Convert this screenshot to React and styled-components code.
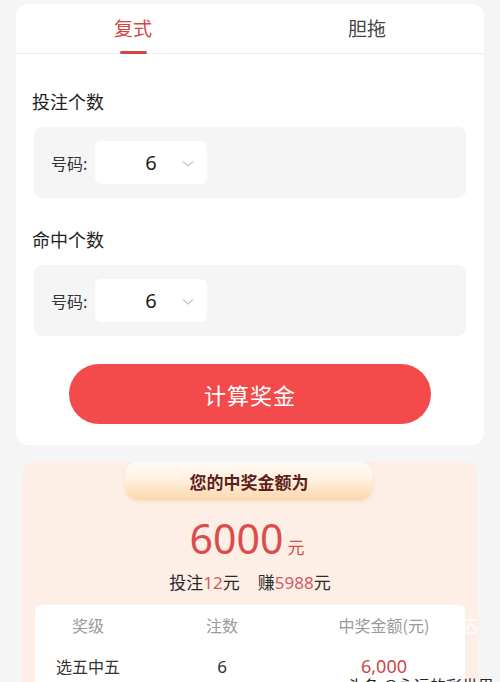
import React from "react";
import styled, { createGlobalStyle } from "styled-components";

const Global = createGlobalStyle`
  html, body { margin: 0; padding: 0; background: #f5f5f5; }
  body {
    font-family: "Noto Sans", "Noto Sans CJK SC", sans-serif;
    color: #333;
    -webkit-font-smoothing: antialiased;
  }
`;

const Page = styled.div`
  position: relative;
  height: 682px;
  overflow: hidden;
  padding: 4px 16px 0;
  box-sizing: border-box;
  background: #f5f5f5;
`;

const Card = styled.div`
  background: #fff;
  border-radius: 12px;
  padding-bottom: 21px;
`;

const Tabs = styled.div`
  display: grid;
  grid-template-columns: 1fr 1fr;
  height: 49px;
  border-bottom: 1px solid #ececec;
`;

const Tab = styled.div`
  position: relative;
  display: flex;
  align-items: center;
  justify-content: center;
  padding-bottom: 3px;
  font-family: "Noto Sans CJK SC", sans-serif;
  font-size: 19px;
  color: ${(p) => (p.$active ? "#d6453f" : "#444")};
  &::after {
    content: "";
    display: ${(p) => (p.$active ? "block" : "none")};
    position: absolute;
    bottom: -1px;
    left: 50%;
    width: 27px;
    height: 3px;
    margin-left: -13px;
    border-radius: 2px;
    background: #d6453f;
  }
`;

const Body = styled.div`
  padding: 0 18px;
  display: flex;
  flex-direction: column;
`;

const Label = styled.div`
  margin-top: ${(p) => p.$top}px;
  margin-left: -2px;
  font-family: "Noto Sans CJK SC", sans-serif;
  font-size: 18px;
  line-height: 24px;
  color: #222;
`;

const Field = styled.div`
  margin-top: 14px;
  height: 71px;
  background: #f5f5f5;
  border-radius: 8px;
  display: flex;
  align-items: center;
  padding-left: 17px;
  gap: 6px;
`;

const FieldName = styled.span`
  font-family: "Noto Sans CJK SC", sans-serif;
  font-size: 16px;
  color: #333;
  width: 38px;
`;

const Select = styled.div`
  width: 112px;
  height: 43px;
  background: #fff;
  border-radius: 6px;
  display: grid;
  grid-template-columns: 1fr 1fr 1fr;
  align-items: center;
  justify-items: center;
`;

const SelectValue = styled.span`
  grid-column: 2;
  font-family: "Noto Sans", sans-serif;
  font-size: 20px;
  color: #222;
`;

const ChevronBox = styled.span`
  grid-column: 3;
  display: flex;
  padding-top: 2px;
`;

const Button = styled.button`
  margin: 28px 35px 0;
  height: 60px;
  border: 0;
  border-radius: 30px;
  background: #f34b4b;
  color: #fff;
  font-family: "Noto Sans CJK SC", sans-serif;
  font-size: 22px;
  letter-spacing: 1px;
`;

const Result = styled.div`
  margin: 17px 6px 0;
  background: #fdeee6;
  border-radius: 12px;
  padding: 0 13px 40px;
  display: flex;
  flex-direction: column;
  align-items: stretch;
`;

const Banner = styled.div`
  align-self: center;
  width: 248px;
  height: 38px;
  margin-left: -2px;
  border-radius: 12px 12px 14px 14px;
  background: linear-gradient(180deg, #fffaf4 0%, #fff1e1 45%, #fcd7ab 100%);
  box-shadow: 0 2px 3px rgba(240, 180, 120, 0.25);
  display: flex;
  align-items: center;
  justify-content: center;
  font-family: "Noto Sans CJK SC", sans-serif;
  font-size: 17px;
  font-weight: 700;
  color: #5e1f1b;
`;

const Amount = styled.div`
  margin-top: 10px;
  display: flex;
  align-items: baseline;
  justify-content: center;
  color: #dc4c4c;
  padding-right: 6px;
`;

const Big = styled.span`
  font-family: "Noto Sans", sans-serif;
  font-size: 41px;
  line-height: 56px;
`;

const Unit = styled.span`
  margin-left: 4px;
  font-family: "Noto Sans CJK SC", sans-serif;
  font-size: 17px;
`;

const Summary = styled.div`
  margin-top: 3px;
  font-family: "Noto Sans CJK SC", sans-serif;
  font-size: 17px;
  line-height: 26px;
  color: #2a2a2a;
  display: flex;
  justify-content: center;
  gap: 18px;
`;

const Num = styled.span`
  font-family: "Noto Sans", sans-serif;
  color: #d45a5c;
`;

const Table = styled.div`
  margin-top: 9px;
  background: #fff;
  border-radius: 6px;
  padding-bottom: 30px;
`;

const Row = styled.div`
  display: grid;
  grid-template-columns: 106px 1fr 1fr;
  height: ${(p) => (p.$head ? 40 : 42)}px;
  align-items: center;
`;

const Cell = styled.span`
  text-align: center;
  font-family: ${(p) => (p.$num ? '"Noto Sans", sans-serif' : '"Noto Sans CJK SC", sans-serif')};
  font-size: ${(p) => p.$size || 16}px;
  color: ${(p) => p.$color || "#333"};
`;

const Watermark = styled.div`
  position: absolute;
  right: 6px;
  bottom: -15px;
  font-family: "Noto Sans CJK SC", sans-serif;
  font-size: 16px;
  color: #222;
  text-shadow: 0 0 2px #fff;
`;

const FaintMark = styled.div`
  position: absolute;
  right: 22px;
  top: 610px;
  font-family: "Noto Sans CJK SC", sans-serif;
  font-size: 20px;
  font-weight: 700;
  color: rgba(255, 255, 255, 0.7);
`;

function Chevron() {
  return (
    <svg width="12" height="8" viewBox="0 0 12 8">
      <path d="M1 1.5 L6 6 L11 1.5" fill="none" stroke="#c4c4c4" strokeWidth="1.2" />
    </svg>
  );
}

function NumberField() {
  return (
    <Field>
      <FieldName>号码:</FieldName>
      <Select>
        <SelectValue>6</SelectValue>
        <ChevronBox>
          <Chevron />
        </ChevronBox>
      </Select>
    </Field>
  );
}

export default function App() {
  return (
    <>
      <Global />
      <Page>
        <Card>
          <Tabs>
            <Tab $active>复式</Tab>
            <Tab>胆拖</Tab>
          </Tabs>
          <Body>
            <Label $top={35}>投注个数</Label>
            <NumberField />
            <Label $top={29}>命中个数</Label>
            <NumberField />
            <Button>计算奖金</Button>
          </Body>
        </Card>
        <Result>
          <Banner>您的中奖金额为</Banner>
          <Amount>
            <Big>6000</Big>
            <Unit>元</Unit>
          </Amount>
          <Summary>
            <span>
              投注<Num>12</Num>元
            </span>
            <span>
              赚<Num>5988</Num>元
            </span>
          </Summary>
          <Table>
            <Row $head>
              <Cell $color="#9a9a9a">奖级</Cell>
              <Cell $color="#9a9a9a">注数</Cell>
              <Cell $color="#9a9a9a">中奖金额(元)</Cell>
            </Row>
            <Row>
              <Cell>选五中五</Cell>
              <Cell $num $size={17}>6</Cell>
              <Cell $num $size={18} $color="#c9484a">6,000</Cell>
            </Row>
          </Table>
        </Result>
        <FaintMark>达</FaintMark>
        <Watermark>头条 @永远的彩世界</Watermark>
      </Page>
    </>
  );
}
